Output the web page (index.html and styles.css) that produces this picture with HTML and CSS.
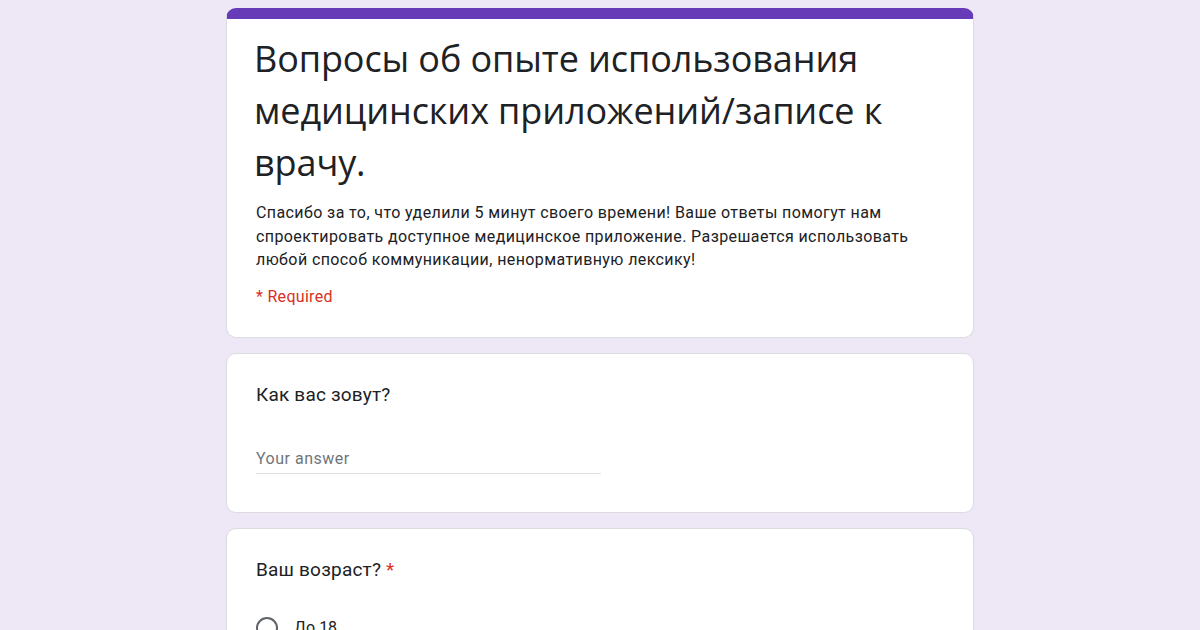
FILE: index.html
```html
<!DOCTYPE html>
<html lang="ru">
<head>
<meta charset="utf-8">
<link rel="stylesheet" href="styles.css">
</head>
<body>
<div class="form">
  <div class="card header-card">
    <h1 class="title">Вопросы об опыте использования медицинских приложений/записе к врачу.</h1>
    <p class="desc">Спасибо за то, что уделили 5 минут своего времени! Ваше ответы помогут нам спроектировать доступное медицинское приложение. Разрешается использовать любой способ коммуникации, ненормативную лексику!</p>
    <div class="required">* Required</div>
  </div>
  <div class="card question">
    <div class="q-title">Как вас зовут?</div>
    <div class="answer">Your answer</div>
  </div>
  <div class="card question">
    <div class="q-title">Ваш возраст? <span class="star">*</span></div>
    <div class="option"><span class="radio"></span><span class="opt-label">До 18</span></div>
  </div>
</div>
</body>
</html>
```
FILE: styles.css
```css
html, body {
  margin: 0;
  padding: 0;
  background: #ede7f6;
  height: 630px;
  overflow: hidden;
}
.form {
  width: 748px;
  margin: 8px auto 0;
  display: flex;
  flex-direction: column;
  gap: 15px;
}
.card {
  background: #fff;
  border: 1px solid #dadce0;
  border-radius: 10px;
  padding: 0 29px;
}
.header-card {
  border-top: 11px solid #673ab7;
  padding-top: 14px;
  padding-bottom: 30px;
}
.title {
  margin: 0 0 0 -2px;
  font-family: "Open Sans", sans-serif;
  font-weight: 400;
  font-size: 36px;
  line-height: 52px;
  color: #202124;
  letter-spacing: -0.1px;
}
.desc {
  margin: 12px 0 0;
  font-family: Roboto, sans-serif;
  font-size: 16px;
  line-height: 23.5px;
  color: #202124;
  letter-spacing: 0.4px;
}
.required {
  margin-top: 15px;
  font-family: Roboto, sans-serif;
  font-size: 16px;
  line-height: 20px;
  color: #d93025;
  letter-spacing: 0.3px;
}
.question {
  padding-top: 29px;
  padding-bottom: 38px;
}
.q-title {
  font-family: Roboto, sans-serif;
  font-size: 19px;
  line-height: 24px;
  color: #202124;
  letter-spacing: 0.2px;
}
.star {
  color: #d93025;
}
.answer {
  margin-top: 42px;
  width: 345px;
  font-family: Roboto, sans-serif;
  font-size: 16px;
  line-height: 20px;
  color: #70757a;
  padding-bottom: 4px;
  border-bottom: 1px solid #e0e0e0;
  letter-spacing: 0.5px;
}
.option {
  margin-top: 35px;
  display: flex;
  align-items: center;
  gap: 16px;
}
.radio {
  width: 22px;
  height: 22px;
  border: 2px solid #5f6368;
  border-radius: 50%;
  box-sizing: border-box;
}
.opt-label {
  font-family: Roboto, sans-serif;
  font-size: 16px;
  color: #202124;
}
```
